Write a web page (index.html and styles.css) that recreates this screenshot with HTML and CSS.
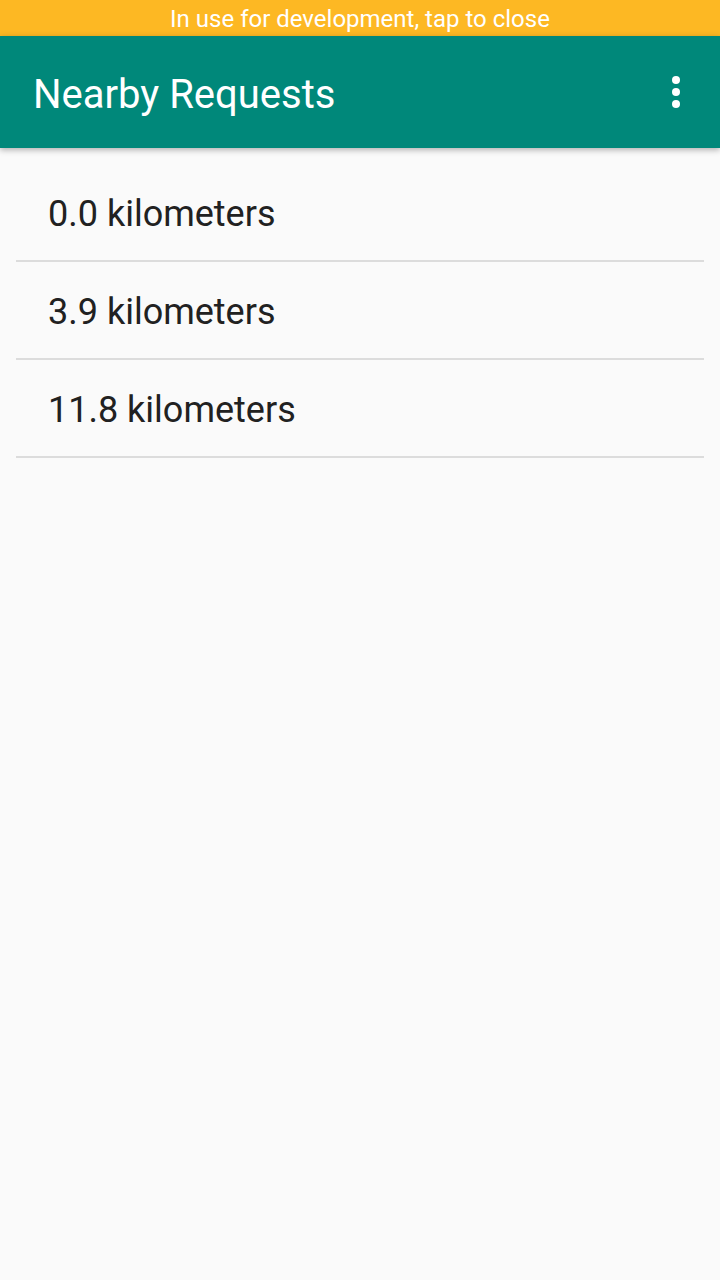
FILE: index.html
```html
<!DOCTYPE html>
<html>
<head>
<meta charset="utf-8">
<link rel="stylesheet" href="styles.css">
</head>
<body>
<div class="dev-bar">In use for development, tap to close</div>
<header class="toolbar">
  <h1 class="title">Nearby Requests</h1>
  <svg class="menu" width="8" height="32" viewBox="0 0 8 32">
    <circle cx="4" cy="4" r="4" fill="#fff"/>
    <circle cx="4" cy="16" r="4" fill="#fff"/>
    <circle cx="4" cy="28" r="4" fill="#fff"/>
  </svg>
</header>
<ul class="list">
  <li class="item">0.0 kilometers</li>
  <li class="item">3.9 kilometers</li>
  <li class="item">11.8 kilometers</li>
</ul>
</body>
</html>
```
FILE: styles.css
```css
html, body {
  margin: 0;
  padding: 0;
  background: #fafafa;
  font-family: Roboto, "Noto Sans", sans-serif;
  width: 720px;
  height: 1280px;
  overflow: hidden;
}
.dev-bar {
  height: 36px;
  background: #fdb823;
  color: #fff;
  font-size: 24px;
  line-height: 38px;
  text-align: center;
}
.toolbar {
  height: 112px;
  background: #00887a;
  display: flex;
  align-items: center;
  justify-content: space-between;
  padding: 4px 40px 0 33px;
  box-sizing: border-box;
  box-shadow: 0 2px 6px rgba(0,0,0,0.3);
  position: relative;
  z-index: 1;
}
.title {
  margin: 0;
  color: #fff;
  font-weight: 400;
  font-size: 40px;
}
.menu {
  display: block;
  margin-top: -4px;
}
.list {
  list-style: none;
  margin: 0;
  padding: 16px 16px 0;
}
.item {
  border-bottom: 2px solid #dcdcdc;
  font-size: 36px;
  color: #212121;
  padding-left: 32px;
  padding-top: 3px;
  box-sizing: content-box;
  height: 93px;
  display: flex;
  align-items: center;
}
```
